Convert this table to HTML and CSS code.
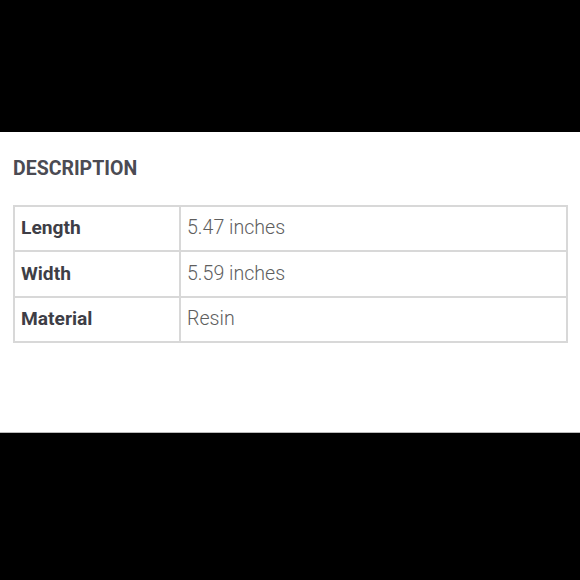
FILE: index.html
```html
<!DOCTYPE html>
<html>
<head>
<meta charset="utf-8">
<link rel="stylesheet" href="styles.css">
</head>
<body>
<div class="band"></div>
<section class="panel">
  <h2 class="title">DESCRIPTION</h2>
  <table class="specs">
    <tr><th>Length</th><td>5.47 inches</td></tr>
    <tr><th>Width</th><td>5.59 inches</td></tr>
    <tr><th>Material</th><td>Resin</td></tr>
  </table>
</section>
<div class="band bottom"></div>
</body>
</html>
```
FILE: styles.css
```css
html, body {
  margin: 0;
  padding: 0;
  background: #000;
}
body {
  width: 580px;
  height: 580px;
  overflow: hidden;
  font-family: Roboto, "Liberation Sans", sans-serif;
}
.band {
  height: 132px;
  background: #000;
}
.band.bottom {
  height: 147px;
}
.panel {
  height: 301px;
  box-sizing: border-box;
  background: #fff;
  padding: 26px 12px 0 13px;
  border-bottom: 1px solid #bbb;
}
.title {
  margin: 0;
  font-size: 19.5px;
  line-height: 21px;
  font-weight: 700;
  color: #4b4b53;
}
.specs {
  margin-top: 26px;
  width: 100%;
  border-collapse: collapse;
  font-size: 19.2px;
}
.specs th, .specs td {
  border: 2px solid #d8d8d8;
  height: 41.4px;
  padding: 0 6px 2px;
  text-align: left;
  vertical-align: middle;
}
.specs th {
  width: 152px;
  font-weight: 700;
  color: #3e3e46;
}
.specs td {
  font-size: 19.6px;
  font-weight: 300;
  color: #5e5e5e;
}
```
